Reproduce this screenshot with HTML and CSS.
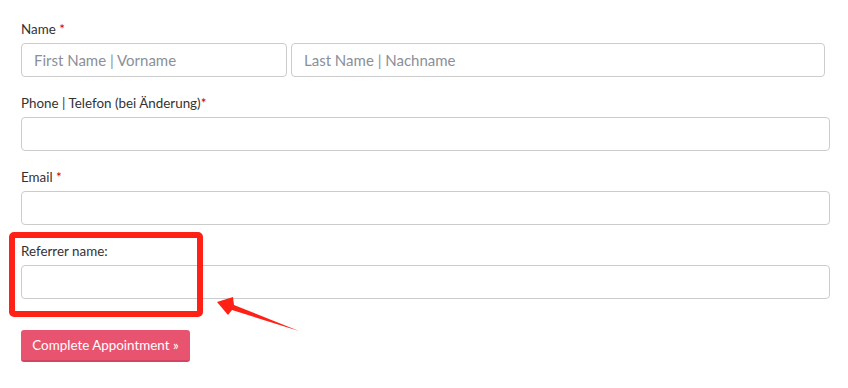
FILE: index.html
```html
<!DOCTYPE html>
<html lang="en">

<head>
    <meta charset="UTF-8" />
    <meta name="viewport" content="width=device-width, initial-scale=1.0" />
    <title>Complete Appointment</title>
    <link rel="stylesheet" href="styles.css">
</head>

<body>
    <form class="booking-form">
        <div class="form-group">
            <label>Name <span class="req">*</span></label>
            <div class="name-row">
                <input type="text" class="first-name" placeholder="First Name | Vorname" />
                <input type="text" class="last-name" placeholder="Last Name | Nachname" />
            </div>
        </div>

        <div class="form-group">
            <label>Phone | Telefon (bei Änderung)<span class="req">*</span></label>
            <input type="text" />
        </div>

        <div class="form-group">
            <label>Email <span class="req">*</span></label>
            <input type="text" />
        </div>

        <div class="form-group referrer">
            <label>Referrer name:</label>
            <input type="text" />
            <div class="highlight-box"></div>
            <svg class="highlight-arrow" width="90" height="40" viewBox="0 0 90 40">
                <polygon points="0,11 16,6 17,14 82,40 15,19 11,24" fill="#ff2116" />
            </svg>
        </div>

        <button type="button" class="btn-submit">Complete Appointment &raquo;</button>
    </form>
</body>

</html>
```

FILE: styles.css
```css
body {
    margin: 0;
    padding: 19px 18px 0 21px;
    background-color: #fff;
    font-family: Lato, "Open Sans", sans-serif;
    color: #333;
}

.form-group {
    margin-bottom: 16px;
}

.form-group label {
    display: block;
    font-size: 13.4px;
    line-height: 20px;
    margin-bottom: 4px;
}

.req {
    color: #c00;
}

.form-group input {
    display: block;
    box-sizing: border-box;
    width: 100%;
    height: 34px;
    padding: 6px 12px;
    border: 1px solid #ccc;
    border-radius: 4px;
    font-family: inherit;
    font-size: 15px;
    color: #555;
    background: #fff;
    outline: none;
}

.form-group input::placeholder {
    color: #8a8f99;
}

.name-row {
    display: flex;
    gap: 4px;
    margin-right: 5px;
}

.name-row .first-name {
    flex: 0 0 266px;
}

.name-row .last-name {
    flex: 1;
}

.referrer {
    position: relative;
}

.highlight-box {
    position: absolute;
    left: -12px;
    top: -9px;
    width: 182px;
    height: 73px;
    border: 6px solid #ff2116;
    border-radius: 5px;
}

.highlight-arrow {
    position: absolute;
    left: 196px;
    top: 50px;
}

.btn-submit {
    display: block;
    margin-top: 31px;
    width: 169px;
    height: 32px;
    padding: 0;
    border: none;
    border-bottom: 2px solid #d24560;
    border-radius: 3px;
    background-color: #e8546f;
    color: #fff;
    font-family: inherit;
    font-size: 13.4px;
}
```
